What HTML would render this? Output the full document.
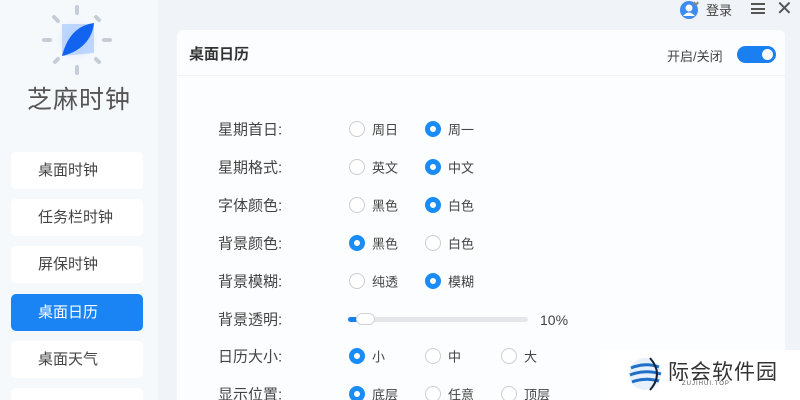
<!DOCTYPE html>
<html style="overflow:hidden;width:800px;height:400px"><head><meta charset="utf-8"><style>
*{margin:0;padding:0;box-sizing:border-box}
body{width:800px;height:400px;overflow:hidden;background:#f0f3f7;font-family:"Liberation Sans","Noto Sans CJK SC",sans-serif;position:relative;color:#333}
.side{position:absolute;left:0;top:0;width:158px;height:400px;background:#f6f9fc}
.title{position:absolute;left:0;width:158px;top:80px;text-align:center;font-size:25px;color:#555;letter-spacing:1px}
.btn{position:absolute;left:11px;width:132px;height:37px;background:#fff;border-radius:5px;font-size:15px;color:#444;padding-left:27px;line-height:37px}
.btn.on{background:#1a84f5;color:#fff}
.card{position:absolute;left:177px;top:30px;width:608px;height:370px;background:#fcfdfe;border-radius:6px 6px 0 0}
.hd{height:46px;border-bottom:1px solid #eef1f5;font-size:15px;font-weight:bold;line-height:50px;padding-left:12px;color:#333}
.lbl{position:absolute;left:218px;font-size:15px;color:#444;transform:translateY(-50%)}
.r{position:absolute;width:16px;height:16px;border-radius:50%;border:1px solid #c9ced6;background:#fff;transform:translate(-50%,-50%)}
.r.on{border:5px solid #1a8cf5}
.t{position:absolute;font-size:13px;color:#444;transform:translateY(-50%)}
.tog{position:absolute;left:737px;top:46px;width:39px;height:17px;border-radius:9px;background:#1a7ff0}
.tog:after{content:"";position:absolute;right:3px;top:3px;width:11px;height:11px;border-radius:50%;background:#fff}
</style></head><body>
<div class="side"></div>
<svg style="position:absolute;left:40px;top:3px" width="75" height="75" viewBox="0 0 75 75">
<defs><radialGradient id="g"><stop offset="0" stop-color="#bcd8ff"/><stop offset="1" stop-color="#f6f9fc" stop-opacity="0"/></radialGradient></defs>
<circle cx="37" cy="37" r="26" fill="url(#g)"/>
<g stroke="#c5ced8" stroke-width="4" stroke-linecap="round">
<line x1="37" y1="4" x2="37" y2="10"/><line x1="37" y1="64" x2="37" y2="70"/>
<line x1="4" y1="37" x2="10" y2="37"/><line x1="64" y1="37" x2="70" y2="37"/>
<line x1="14" y1="14" x2="18" y2="18"/><line x1="56" y1="14" x2="59" y2="17"/>
<line x1="15" y1="59" x2="18" y2="56"/><line x1="56" y1="56" x2="59" y2="59"/></g>
<path d="M22 21 L54 21 L54 50 L22 53Z" fill="#a9c9ff" opacity=".7"/>
<path d="M54 20 C40 22 28 30 22 53 C36 50 52 40 54 20Z" fill="#1264f0"/>
</svg>
<div class="title">芝麻时钟</div>
<div class="btn" style="top:152px">桌面时钟</div>
<div class="btn" style="top:199px">任务栏时钟</div>
<div class="btn" style="top:246px">屏保时钟</div>
<div class="btn on" style="top:294px">桌面日历</div>
<div class="btn" style="top:341px">桌面天气</div>
<div class="btn" style="top:388px;height:12px;border-radius:5px 5px 0 0"></div>
<svg style="position:absolute;left:679px;top:0" width="22" height="20"><circle cx="10" cy="10" r="9" fill="#3d8af0"/><circle cx="10" cy="8" r="3.5" fill="#fff"/><path d="M4 16 Q10 9 16 16" fill="#fff"/><path d="M14 3 l3 3 l3-3 l-1.5-1.5 l-1.5 1.5 l-1.5-1.5z" fill="#888"/></svg>
<div style="position:absolute;left:706px;top:0;font-size:13px;color:#444">登录</div>
<div style="position:absolute;left:751px;top:3px;width:14px;height:11px;border-top:2px solid #555;border-bottom:2px solid #555"><div style="margin-top:2.5px;height:2px;background:#555"></div></div>
<div style="position:absolute;left:776px;top:-4px;font-size:20px;color:#555">✕</div>
<div class="card"><div class="hd">桌面日历</div></div>
<div style="position:absolute;left:667px;top:46px;font-size:13px;color:#444">开启/关闭</div>
<div class="tog"></div>
<div class="lbl" style="top:129px">星期首日:</div><div class="r" style="left:357px;top:129px"></div><div class="t" style="left:372px;top:129px">周日</div><div class="r on" style="left:433px;top:129px"></div><div class="t" style="left:448px;top:129px">周一</div>
<div class="lbl" style="top:167px">星期格式:</div><div class="r" style="left:357px;top:167px"></div><div class="t" style="left:372px;top:167px">英文</div><div class="r on" style="left:433px;top:167px"></div><div class="t" style="left:448px;top:167px">中文</div>
<div class="lbl" style="top:205px">字体颜色:</div><div class="r" style="left:357px;top:205px"></div><div class="t" style="left:372px;top:205px">黑色</div><div class="r on" style="left:433px;top:205px"></div><div class="t" style="left:448px;top:205px">白色</div>
<div class="lbl" style="top:243px">背景颜色:</div><div class="r on" style="left:357px;top:243px"></div><div class="t" style="left:372px;top:243px">黑色</div><div class="r" style="left:433px;top:243px"></div><div class="t" style="left:448px;top:243px">白色</div>
<div class="lbl" style="top:281px">背景模糊:</div><div class="r" style="left:357px;top:281px"></div><div class="t" style="left:372px;top:281px">纯透</div><div class="r on" style="left:433px;top:281px"></div><div class="t" style="left:448px;top:281px">模糊</div>
<div class="lbl" style="top:319px">背景透明:</div>
<div style="position:absolute;left:348px;top:317px;width:180px;height:5px;border-radius:3px;background:#e4e6ea"></div>
<div style="position:absolute;left:348px;top:317px;width:12px;height:5px;border-radius:3px;background:#1a7ff0"></div>
<div style="position:absolute;left:356px;top:313px;width:19px;height:12px;border-radius:6px;background:#fff;border:1px solid #cfd3d9"></div>
<div class="t" style="left:540px;top:320px;font-size:14px">10%</div>
<div class="lbl" style="top:356px">日历大小:</div><div class="r on" style="left:357px;top:356px"></div><div class="t" style="left:372px;top:356px">小</div><div class="r" style="left:433px;top:356px"></div><div class="t" style="left:448px;top:356px">中</div><div class="r" style="left:509px;top:356px"></div><div class="t" style="left:524px;top:356px">大</div>
<div class="lbl" style="top:394px">显示位置:</div><div class="r on" style="left:357px;top:394px"></div><div class="t" style="left:372px;top:394px">底层</div><div class="r" style="left:433px;top:394px"></div><div class="t" style="left:448px;top:394px">任意</div><div class="r" style="left:509px;top:394px"></div><div class="t" style="left:524px;top:394px">顶层</div>
<div style="position:absolute;left:600px;top:350px;width:200px;height:50px;background:#fff"></div>
<svg style="position:absolute;left:628px;top:355px" width="36" height="38"><circle cx="17" cy="19" r="16" fill="#e8f0fb"/><g stroke="#1f6fc8" stroke-width="3" fill="none"><path d="M3 13 Q17 7 31 12"/><path d="M2 20 Q17 14 33 19"/><path d="M4 27 Q17 22 31 26"/></g><path d="M22 3 Q36 19 22 35" stroke="#123" stroke-width="2" fill="none"/></svg>
<div style="position:absolute;left:668px;top:356px;font-size:21px;color:#333;letter-spacing:1px">际会软件园</div>
<div style="position:absolute;left:682px;top:381px;font-size:6px;color:#555;letter-spacing:1px">ZUJIHUI.TOP</div>
</body></html>
